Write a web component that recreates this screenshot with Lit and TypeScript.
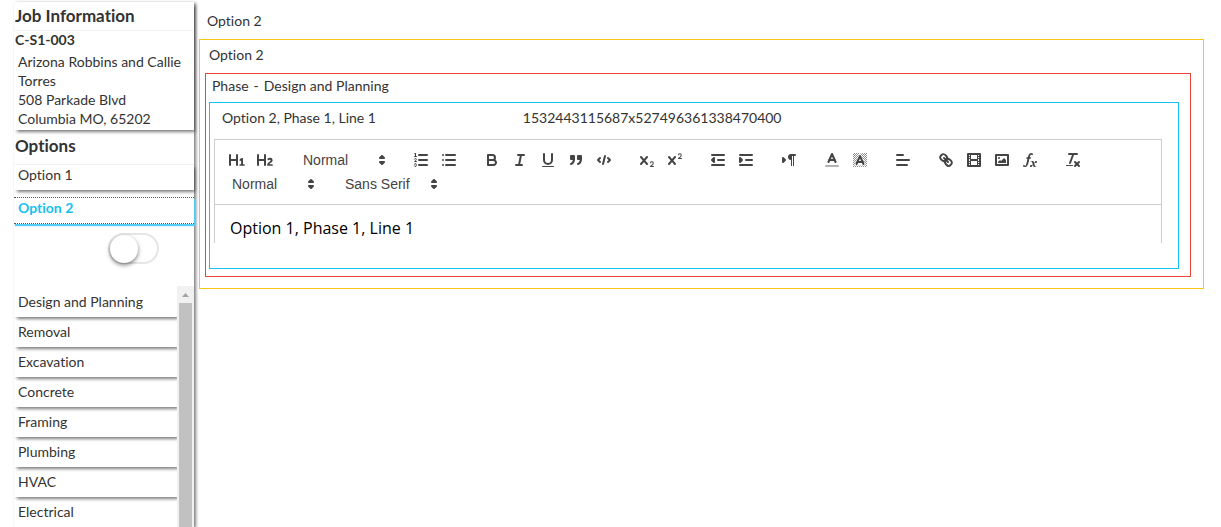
import { LitElement, html, css, svg, SVGTemplateResult } from "lit";
import { customElement, property, state } from "lit/decorators.js";
import { classMap } from "lit/directives/class-map.js";

const crossPath =
  "M9.65,5.241a1,1,0,0,0-1.409.108L6,7.964,3.759,5.349A1,1,0,0,0,2.192,6.59178Q2.21541,6.6213,2.241,6.649L4.684,9.5,2.241,12.35A1,1,0,0,0,3.71,13.70722q0.02557-.02768.049-0.05722L6,11.036,8.241,13.65a1,1,0,1,0,1.567-1.24277Q9.78459,12.3777,9.759,12.35L7.316,9.5,9.759,6.651A1,1,0,0,0,9.65,5.241Z";

const line = (x1: number, y1: number, x2: number, y2: number, cls = "s") =>
  svg`<line class=${cls} x1=${x1} y1=${y1} x2=${x2} y2=${y2}></line>`;
const box = (x: number, y: number, width: number, height: number) =>
  svg`<rect class="f" x=${x} y=${y} width=${width} height=${height}></rect>`;

const hatch = [4, 6, 8, 10, 12, 14, 16, 18, 20, 22, 24, 26, 28, 30, 32];

const icons: Record<string, SVGTemplateResult> = {
  "Heading 1": svg`<path class="f" d="M10,4V14a1,1,0,0,1-2,0V10H3v4a1,1,0,0,1-2,0V4A1,1,0,0,1,3,4V8H8V4a1,1,0,0,1,2,0Zm6.06787,9.209H14.98975V7.59863a.54085.54085,0,0,0-.605-.60547h-.62744a1.01119,1.01119,0,0,0-.748.29688L11.645,8.56641a.5435.5435,0,0,0-.022.8584l.28613.30762a.53861.53861,0,0,0,.84717.0332l.09912-.08789a1.2137,1.2137,0,0,0,.2417-.35254h.02246s-.01123.30859-.01123.60547V13.209H12.041a.54085.54085,0,0,0-.605.60547v.43945a.54085.54085,0,0,0,.605.60547h4.02686a.54085.54085,0,0,0,.605-.60547v-.43945A.54085.54085,0,0,0,16.06787,13.209Z"></path>`,
  "Heading 2": svg`<path class="f" d="M16.73975,13.81445v.43945a.54085.54085,0,0,1-.605.60547H11.855a.58392.58392,0,0,1-.64893-.60547V14.0127c0-2.90527,3.39941-3.42187,3.39941-4.55469a.77675.77675,0,0,0-.84717-.78125,1.17684,1.17684,0,0,0-.83594.38477c-.2749.26367-.561.374-.85791.13184l-.4292-.34082c-.30811-.24219-.38525-.51758-.1543-.81445a2.97155,2.97155,0,0,1,2.45361-1.17676,2.45393,2.45393,0,0,1,2.68408,2.40918c0,2.45312-3.1792,2.92676-3.27832,3.93848h2.79443A.54085.54085,0,0,1,16.73975,13.81445ZM9,3A.99974.99974,0,0,0,8,4V8H3V4A1,1,0,0,0,1,4V14a1,1,0,0,0,2,0V10H8v4a1,1,0,0,0,2,0V4A.99974.99974,0,0,0,9,3Z"></path>`,
  "Numbered list": svg`${line(7, 4, 15, 4)}${line(7, 9, 15, 9)}${line(7, 14, 15, 14)}${line(2.5, 5.5, 4.5, 5.5, "s thin")}<path class="f" d="M3.5,6A0.5,0.5,0,0,1,3,5.5V3.085l-0.276.138A0.5,0.5,0,0,1,2.053,3c-0.124-.247-0.023-0.324.224-0.447l1-.5A0.5,0.5,0,0,1,4,2.5v3A0.5,0.5,0,0,1,3.5,6Z"></path><path class="s thin" d="M4.5,10.5h-2c0-.234,1.85-1.076,1.85-2.234A0.959,0.959,0,0,0,2.5,8.156"></path><path class="s thin" d="M2.5,14.846a0.959,0.959,0,0,0,1.85-.109A0.7,0.7,0,0,0,3.75,14a0.688,0.688,0,0,0,.6-0.736,0.959,0.959,0,0,0-1.85-.109"></path>`,
  "Bulleted list": svg`${line(6, 4, 15, 4)}${line(6, 9, 15, 9)}${line(6, 14, 15, 14)}${line(3, 4, 3, 4)}${line(3, 9, 3, 9)}${line(3, 14, 3, 14)}`,
  "Bold": svg`<path class="s" d="M5,4H9.5A2.5,2.5,0,0,1,12,6.5v0A2.5,2.5,0,0,1,9.5,9H5V4Z"></path><path class="s" d="M5,9h5.5A2.5,2.5,0,0,1,13,11.5v0A2.5,2.5,0,0,1,10.5,14H5V9Z"></path>`,
  "Italic": svg`${line(7, 4, 13, 4)}${line(5, 14, 11, 14)}${line(8, 14, 10, 4)}`,
  "Underline": svg`<path class="s" d="M5,3V9a4.012,4.012,0,0,0,4,4H9a4.012,4.012,0,0,0,4-4V3"></path><rect class="f" x="3" y="15" width="12" height="1" rx="0.5"></rect>`,
  "Quote": svg`<rect class="s f" x="4" y="5" width="3" height="3"></rect><rect class="s f" x="11" y="5" width="3" height="3"></rect><path class="s f" d="M7,8c0,4.031-3,5-3,5"></path><path class="s f" d="M14,8c0,4.031-3,5-3,5"></path>`,
  "Code": svg`<polyline class="s" points="5 7 3 9 5 11"></polyline><polyline class="s" points="13 7 15 9 13 11"></polyline>${line(10, 5, 8, 13)}`,
  "Subscript": svg`<path class="f" d="M15.5,15H13.861a3.858,3.858,0,0,0,1.914-2.975,1.8,1.8,0,0,0-1.6-1.751A1.921,1.921,0,0,0,12.021,11.7a0.50013,0.50013,0,1,0,.957.291h0a0.914,0.914,0,0,1,1.053-.725,0.81,0.81,0,0,1,.744.762c0,1.076-1.16971,1.86982-1.93971,2.43082A1.45639,1.45639,0,0,0,12,15.5a0.5,0.5,0,0,0,.5.5h3A0.5,0.5,0,0,0,15.5,15Z"></path><path class="f" d=${crossPath}></path>`,
  "Superscript": svg`<path class="f" d="M15.5,7H13.861a4.015,4.015,0,0,0,1.914-2.975,1.8,1.8,0,0,0-1.6-1.751A1.922,1.922,0,0,0,12.021,3.7a0.5,0.5,0,1,0,.957.291,0.917,0.917,0,0,1,1.053-.725,0.81,0.81,0,0,1,.744.762c0,1.077-1.164,1.925-1.934,2.486A1.423,1.423,0,0,0,12,7.5a0.5,0.5,0,0,0,.5.5h3A0.5,0.5,0,0,0,15.5,7Z"></path><path class="f" d=${crossPath}></path>`,
  "Outdent": svg`${line(3, 14, 15, 14)}${line(3, 4, 15, 4)}${line(9, 9, 15, 9)}<polyline class="s" points="5 7 5 11 3 9 5 7"></polyline>`,
  "Indent": svg`${line(3, 14, 15, 14)}${line(3, 4, 15, 4)}${line(9, 9, 15, 9)}<polyline class="s f" points="3 7 3 11 5 9 3 7"></polyline>`,
  "Text direction": svg`<polygon class="s f" points="3 11 5 9 3 7 3 11"></polygon>${line(15, 4, 11, 4)}<path class="f" d="M11,3a3,3,0,0,0,0,6h1V3H11Z"></path>${box(11, 4, 1, 11)}${box(13, 4, 1, 11)}`,
  "Text colour": svg`<line class="s faded" x1="3" y1="15" x2="15" y2="15"></line><polyline class="s" points="5.5 11 9 3 12.5 11"></polyline>${line(11.63, 9, 6.38, 9)}`,
  "Highlight": svg`<svg x="2" y="2" width="14" height="14" viewBox="2 2 14 14">${hatch.map((n) => line(n - 2, 2, n - 16, 16, "s hair"))}</svg><polygon class="halo" points="5.5 13 9 5 12.5 13"></polygon><polyline class="s" points="5.5 13 9 5 12.5 13"></polyline>${line(11.63, 11, 6.38, 11)}`,
  "Align": svg`${line(3, 9, 15, 9)}${line(3, 14, 13, 14)}${line(3, 4, 9, 4)}`,
  "Link": svg`${line(7, 7, 11, 11)}<path class="s" d="M8.9,4.577a3.476,3.476,0,0,1,.36,4.679A3.476,3.476,0,0,1,4.577,8.9C3.185,7.5,2.035,6.4,4.217,4.217S7.5,3.185,8.9,4.577Z"></path><path class="s" d="M13.423,9.1a3.476,3.476,0,0,0-4.679-.36,3.476,3.476,0,0,0,.36,4.679c1.392,1.392,2.5,2.542,4.679.36S14.815,10.5,13.423,9.1Z"></path>`,
  "Video": svg`<rect class="s" x="3" y="3" width="12" height="12"></rect>${box(5, 3, 1, 12)}${box(12, 3, 1, 12)}${box(5, 8, 8, 2)}${[5, 7, 10, 12].map((y) => svg`${box(3, y, 3, 1)}${box(12, y, 3, 1)}`)}`,
  "Image": svg`<rect class="s" x="3" y="4" width="12" height="10"></rect><circle class="f" cx="6" cy="7" r="1"></circle><polyline class="f" points="5 12 5 11 7 9 8 10 11 7 13 9 13 12 5 12"></polyline>`,
  "Formula": svg`<path class="f" d="M11.759,2.482a2.561,2.561,0,0,0-3.53.607A7.656,7.656,0,0,0,6.8,6.2C6.109,9.188,5.275,14.677,4.15,14.927a1.545,1.545,0,0,0-1.3-.933A0.922,0.922,0,0,0,2,15.036S1.954,16,4.119,16s3.091-2.691,3.7-5.553c0.177-.826.36-1.726,0.554-2.6L8.775,6.2c0.381-1.421.807-2.521,1.306-2.676a1.014,1.014,0,0,0,1.02.56A0.966,0.966,0,0,0,11.759,2.482Z"></path><rect class="f" x="5.15" y="6.2" width="5" height="1.6" rx="0.8"></rect><path class="f" d="M13.663,12.027a1.662,1.662,0,0,1,.266-0.276q0.193,0.069.456,0.138a2.1,2.1,0,0,0,.535.069,1.075,1.075,0,0,0,.767-0.3,1.044,1.044,0,0,0,.314-0.8,0.84,0.84,0,0,0-.238-0.619,0.8,0.8,0,0,0-.594-0.239,1.154,1.154,0,0,0-.781.3,4.607,4.607,0,0,0-.781,1q-0.091.15-.218,0.346l-0.246.38c-0.068-.288-0.137-0.582-0.212-0.885-0.459-1.847-2.494-.984-2.941-0.8-0.482.2-.353,0.647-0.094,0.529a0.869,0.869,0,0,1,1.281.585c0.217,0.751.377,1.436,0.527,2.038a5.688,5.688,0,0,1-.362.467,2.69,2.69,0,0,1-.264.271q-0.221-.08-0.471-0.147a2.029,2.029,0,0,0-.522-0.066,1.079,1.079,0,0,0-.768.3A1.058,1.058,0,0,0,9,15.131a0.82,0.82,0,0,0,.832.852,1.134,1.134,0,0,0,.787-0.3,5.11,5.11,0,0,0,.776-0.993q0.141-.219.215-0.34c0.046-.076.122-0.194,0.223-0.346a2.786,2.786,0,0,0,.918,1.726,2.582,2.582,0,0,0,2.376-.185c0.317-.181.212-0.565,0-0.494A0.807,0.807,0,0,1,14.176,15a5.159,5.159,0,0,1-.913-2.446l0,0Q13.487,12.24,13.663,12.027Z"></path>`,
  "Clear formatting": svg`${line(5, 3, 13, 3)}${line(6, 12, 9.35, 3)}${line(11, 11, 15, 15)}${line(15, 11, 11, 15)}<rect class="f" x="2" y="14" width="7" height="1" rx="0.5"></rect>`,
};

type Group = { buttons: string[] } | { label: string; options: string[]; wide?: boolean };

const groups: Group[] = [
  { buttons: ["Heading 1", "Heading 2"] },
  { label: "Heading level", options: ["Normal", "Heading 1", "Heading 2", "Heading 3"] },
  { buttons: ["Numbered list", "Bulleted list"] },
  { buttons: ["Bold", "Italic", "Underline", "Quote", "Code"] },
  { buttons: ["Subscript", "Superscript"] },
  { buttons: ["Outdent", "Indent"] },
  { buttons: ["Text direction"] },
  { buttons: ["Text colour", "Highlight"] },
  { buttons: ["Align"] },
  { buttons: ["Link", "Video", "Image", "Formula"] },
  { buttons: ["Clear formatting"] },
  { label: "Text size", options: ["Normal", "Small", "Large", "Huge"] },
  { label: "Font", options: ["Sans Serif", "Serif", "Monospace"], wide: true },
];

@customElement("rich-editor")
export class RichEditor extends LitElement {
  @property() value = "";

  static styles = css`
    :host { display: block; }
    .toolbar {
      display: flex;
      flex-wrap: wrap;
      column-gap: 15px;
      padding: 8px;
      border: 1px solid #ccc;
    }
    .group { display: flex; }
    button {
      width: 28px;
      height: 24px;
      padding: 3px 5px;
      border: 0;
      background: none;
      cursor: pointer;
    }
    svg { display: block; }
    .icon { width: 18px; height: 18px; }
    .s {
      fill: none;
      stroke: #444;
      stroke-width: 2;
      stroke-linecap: round;
      stroke-linejoin: round;
    }
    .f { fill: #444; }
    .thin { stroke-width: 1; }
    .hair { stroke-width: 0.6; }
    .faded { opacity: 0.4; }
    .halo { fill: #fff; stroke: #fff; stroke-width: 3; }
    .picker {
      display: grid;
      grid-template-columns: 1fr 18px;
      align-items: center;
      box-sizing: border-box;
      width: 98px;
      height: 24px;
      padding-right: 1px;
    }
    .picker.wide { width: 108px; }
    .picker select {
      grid-area: 1 / 1 / 2 / 3;
      appearance: none;
      height: 24px;
      padding: 0 18px 0 9px;
      border: 0;
      background: none;
      color: #444;
      font: 500 14px/24px "Liberation Sans", Arial, sans-serif;
    }
    .picker svg { grid-area: 1 / 2; pointer-events: none; }
    textarea {
      display: block;
      box-sizing: border-box;
      width: 100%;
      height: 38px;
      padding: 12px 15px 0;
      border: solid #ccc;
      border-width: 0 1px;
      outline: 0;
      resize: none;
      overflow: hidden;
      color: #000;
      background: #fff;
      font: 16px/22px "Open Sans", sans-serif;
    }
  `;

  private renderGroup(group: Group) {
    if ("buttons" in group) {
      return html`<div class="group">
        ${group.buttons.map(
          (name) => html`<button type="button" aria-label=${name}>
            <svg class="icon" viewBox="0 0 18 18">${icons[name]}</svg>
          </button>`
        )}
      </div>`;
    }
    return html`<div class=${classMap({ picker: true, wide: !!group.wide })}>
      <select aria-label=${group.label}>
        ${group.options.map((o) => html`<option>${o}</option>`)}
      </select>
      <svg class="icon" viewBox="0 0 18 18">
        <polygon class="s f" points="7 11 9 13 11 11 7 11"></polygon>
        <polygon class="s f" points="7 7 9 5 11 7 7 7"></polygon>
      </svg>
    </div>`;
  }

  render() {
    return html`
      <div class="toolbar" role="toolbar" aria-label="Formatting">
        ${groups.map((g) => this.renderGroup(g))}
      </div>
      <textarea aria-label="Line description" .value=${this.value}></textarea>
    `;
  }
}

@customElement("app-root")
export class AppRoot extends LitElement {
  @state() private selected = "Option 2";

  private phases = [
    "Design and Planning", "Removal", "Excavation", "Concrete",
    "Framing", "Plumbing", "HVAC", "Electrical",
  ];

  static styles = css`
    :host {
      display: flex;
      height: 100vh;
      overflow: hidden;
      background: #fff;
      color: #333;
      font: 14px/20px Lato, sans-serif;
      font-variant-ligatures: none;
    }
    h1, h2, h3, p, ul { margin: 0; padding: 0; font-weight: 400; }
    ul { list-style: none; }
    .sidebar {
      display: flex;
      flex-direction: column;
      flex: none;
      box-sizing: border-box;
      width: 180px;
      margin: 2px 5px 0 14px;
      box-shadow: 2px 1px 3px rgba(0, 0, 0, 0.5);
    }
    .sidebar h2 {
      padding: 0 1px;
      font-size: 17px;
      line-height: 29px;
      font-weight: 700;
    }
    .card { box-shadow: 2px 3px 3px -1px rgba(0, 0, 0, 0.5); }
    .job { padding-bottom: 2px; }
    .job h2 { border-bottom: 1px solid #f2f2f2; line-height: 28px; }
    .job h3 { padding: 0 1px; font-size: 14px; line-height: 18px; font-weight: 700; }
    .job p { padding: 3px 4px 0; line-height: 19px; }
    .options { padding-top: 1px; }
    .options h2 { padding-bottom: 4px; }
    .option {
      display: block;
      box-sizing: border-box;
      width: 100%;
      padding: 0 4px 5px;
      border: 0;
      background: #fff;
      color: inherit;
      font: inherit;
      text-align: left;
      cursor: pointer;
    }
    .options .option { margin-bottom: 7px; border-top: 1px solid #f2f2f2; }
    .options .option.active {
      margin-bottom: 0;
      border: dotted #4f5b62;
      border-width: 1px 0;
      color: #17c1f0;
      font-weight: 700;
      box-shadow: 1px 2px 1px #52cdf5;
    }
    .switch-row {
      display: flex;
      justify-content: flex-end;
      padding: 9px 35px 22px 0;
    }
    .switch {
      appearance: none;
      box-sizing: border-box;
      width: 51px;
      height: 31px;
      margin: 0;
      border: 2px solid #e6e6e6;
      border-radius: 16px;
      background: #fff;
      cursor: pointer;
    }
    .switch::before {
      content: "";
      display: block;
      width: 28px;
      height: 28px;
      border-radius: 50%;
      background: #fff;
      box-shadow: 0 2px 4px rgba(0, 0, 0, 0.5);
    }
    .switch:checked { background: #17c1f0; }
    .switch:checked::before { margin-left: 19px; }
    .phases { display: flex; flex: 1; min-height: 0; }
    .phases ul {
      display: flex;
      flex-direction: column;
      flex: 1;
      gap: 5px;
      padding-top: 6px;
      overflow: hidden;
    }
    .phases li { flex: none; }
    .scrollbar {
      display: flex;
      flex-direction: column;
      width: 17px;
      background: #f1f1f1;
    }
    .scrollbar svg { display: block; width: 17px; height: 17px; fill: #a3a3a3; }
    .thumb { flex: 1; margin: 0 2px; background: #c1c1c1; }
    main { flex: 1; min-width: 0; padding-right: 17px; }
    h1 { padding: 11px 8px 8px; font-size: 14px; }
    .frame { border: 1px solid; }
    .frame > h2, .frame > h3 { font-size: 14px; color: #333; }
    .estimate { padding: 0 12px 11px 5px; border-color: #fac711; }
    .estimate > h2 { padding: 5px 4px 8px; }
    .phase { padding: 0 11px 7px 3px; border-color: #ee4438; }
    .phase > h3 { display: flex; gap: 5px; padding: 2px 3px 6px; }
    .line-item { padding: 0 16px 25px 4px; border-color: #17c1f0; }
    .fields {
      display: grid;
      grid-template-columns: 32% 1fr;
      padding: 5px 0 11px 8px;
      color: #333;
    }
  `;

  render() {
    return html`
      <aside class="sidebar">
        <section class="card job">
          <h2>Job Information</h2>
          <h3>C-S1-003</h3>
          <p>Arizona Robbins and Callie Torres<br />508 Parkade Blvd<br />Columbia MO, 65202</p>
        </section>
        <section class="options">
          <h2>Options</h2>
          ${["Option 1", "Option 2"].map(
            (name) => html`<button
              type="button"
              class=${classMap({ card: true, option: true, active: name === this.selected })}
              @click=${() => (this.selected = name)}
            >${name}</button>`
          )}
        </section>
        <div class="switch-row">
          <input class="switch" type="checkbox" role="switch" aria-label="Show all phases" />
        </div>
        <nav class="phases" aria-label="Phases">
          <ul>
            ${this.phases.map(
              (name) => html`<li><button type="button" class="card option">${name}</button></li>`
            )}
          </ul>
          <div class="scrollbar" aria-hidden="true">
            <svg viewBox="0 0 17 17"><path d="M5 11L8.500 7L12 11Z"></path></svg>
            <div class="thumb"></div>
          </div>
        </nav>
      </aside>
      <main>
        <h1>${this.selected}</h1>
        <section class="frame estimate">
          <h2>${this.selected}</h2>
          <section class="frame phase">
            <h3><span>Phase</span> <span>-</span> <span>Design and Planning</span></h3>
            <section class="frame line-item">
              <div class="fields">
                <span>Option 2, Phase 1, Line 1</span>
                <span>1532443115687x527496361338470400</span>
              </div>
              <rich-editor value="Option 1, Phase 1, Line 1"></rich-editor>
            </section>
          </section>
        </section>
      </main>
    `;
  }
}
